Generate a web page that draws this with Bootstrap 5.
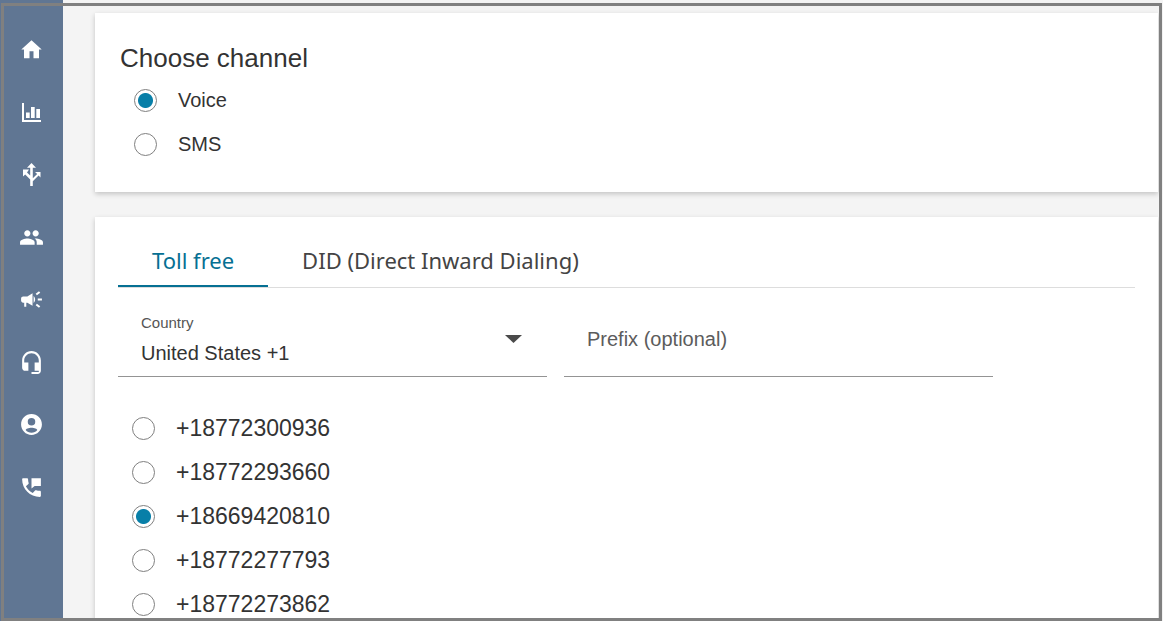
<!DOCTYPE html>
<html lang="en">
<head>
<meta charset="utf-8">
<meta name="viewport" content="width=device-width, initial-scale=1">
<title>Choose channel</title>
<link href="https://cdn.jsdelivr.net/npm/bootstrap@5.3.0/dist/css/bootstrap.min.css" rel="stylesheet">
<style>
  body { font-family: "Liberation Sans", Arial, sans-serif; font-size: 20px; line-height: 24px; color: #333; background: #f4f4f4; }
  .app-shell { height: 100vh; }
  /* window outline drawn over the whole app */
  .window-outline { position: fixed; inset: 3px 1px 0 1px; border: 3px solid #808080; pointer-events: none; z-index: 10; }
  .side-nav { width: 63px; background: #607693; padding-top: 37px; }
  .side-list { height: 463px; }
  .side-list a { color: #fff; }
  .side-list svg { width: 25px; height: 25px; fill: currentColor; display: block; }
  .page-area { padding: 13px 5px 0 32px; gap: 25px; }
  .panel { background: #fff; box-shadow: 0 2px 5px rgba(0, 0, 0, .2); }
  .channel-panel { padding: 29px 25px 26px; }
  .numbers-panel { padding: 17px 23px 23px; }
  .panel-title { font-size: 26px; line-height: 32px; font-weight: 400; }
  .choice { height: 44px; padding-left: 14px; gap: 21px; }
  .choice .form-check-input { width: 23px; height: 23px; margin: 0; border: 1px solid #808080; background: #fff; box-shadow: none; flex: none; }
  .choice .form-check-input:checked { background: radial-gradient(circle, #087fa8 7px, #fff 8px); }
  .number-list { font-size: 23px; margin-top: 29px; }
  .type-tabs { border-bottom: 1px solid #ddd; font-family: "Noto Sans", Tahoma, sans-serif; font-size: 22px; }
  .type-tabs .nav-link { height: 53px; padding: 0 34px; color: #444; background: none; border: 0; border-bottom: 2px solid transparent; border-radius: 0; }
  .type-tabs .nav-link.active { color: #067093; border-bottom-color: #067093; }
  .field-grid { display: grid; grid-template-columns: repeat(2, minmax(0, 429px)); gap: 17px; padding-top: 17px; }
  .line-field { height: 72px; border-bottom: 1px solid #949494; padding: 0 25px 3px 23px; }
  .line-field label { font-size: 15px; line-height: 20px; color: #555; margin-bottom: 8px; }
  .line-field select, .line-field input { appearance: none; border: 0; padding: 0; background: none; color: #333; outline: 0; width: 100%; }
  .line-field input::placeholder { color: #5c5c5c; opacity: 1; }
  .caret { width: 17px; height: 8px; fill: #4a4a4a; flex: none; }
</style>
<script src="https://cdn.jsdelivr.net/npm/bootstrap@5.3.0/dist/js/bootstrap.bundle.min.js" defer></script>
</head>
<body>
<div class="app-shell d-flex overflow-hidden">
  <nav class="side-nav flex-shrink-0" aria-label="Main">
    <ul class="side-list list-unstyled d-flex flex-column justify-content-between align-items-center m-0">
      <li><a href="#" aria-label="Home"><svg viewBox="0 0 25 25"><path d="M10.500 21.300v-7h4v7H20v-8.800h2.700L12.500 3.300 2.300 12.500H5v8.800z"/></svg></a></li>
      <li><a href="#" aria-label="Reports"><svg viewBox="0 0 25 25"><path d="M3 3h2v17h17v2H3zM7 12.500h3.700v5.500H7zM12 7h3.700v11H12zM17.300 9h3.700v9h-3.700z"/></svg></a></li>
      <li><a href="#" aria-label="Flows"><svg viewBox="0 0 25 25"><path d="M12.500 1l4.500 4.800h-3.200v10.400l4.400-4.200L16 10h5.500v5.500l-1.900-1.900-5.800 5.600V24h-2.600v-6.500L6.200 12.500 4 14.500V7.500h6L8 10.500l3.200 3V5.800H8z"/></svg></a></li>
      <li><a href="#" aria-label="Contacts"><svg viewBox="0 0 24 24"><path d="M16 11c1.660 0 2.990-1.340 2.990-3S17.660 5 16 5s-3 1.340-3 3 1.340 3 3 3zm-8 0c1.660 0 2.990-1.340 2.990-3S9.660 5 8 5 5 6.340 5 8s1.340 3 3 3zm0 2c-2.330 0-7 1.170-7 3.500V19h14v-2.500C15 14.170 10.330 13 8 13zm8 0c-.29 0-.62.02-.97.05 1.160.84 1.970 1.970 1.970 3.450V19h6v-2.500c0-2.330-4.670-3.500-7-3.500z"/></svg></a></li>
      <li><a href="#" aria-label="Campaigns"><svg viewBox="0 0 24 24"><path d="M18 11v2h4v-2h-4zm-2 6.610c.96.71 2.210 1.650 3.200 2.390.4-.53.8-1.070 1.200-1.600-.99-.74-2.240-1.680-3.200-2.400-.4.54-.8 1.080-1.200 1.610zM20.400 5.600c-.4-.53-.8-1.070-1.200-1.600-.99.74-2.240 1.680-3.200 2.400.4.530.8 1.070 1.200 1.600.96-.72 2.210-1.650 3.200-2.400zM4 9c-1.100 0-2 .9-2 2v2c0 1.100.9 2 2 2h1v4h2v-4h1l5 3V6L8 9H4zm11.500 3c0-1.330-.58-2.530-1.500-3.350v6.690c.92-.81 1.500-2.010 1.500-3.340z"/></svg></a></li>
      <li><a href="#" aria-label="Agents"><svg viewBox="0 0 24 24"><path d="M12 1c-4.970 0-9 4.030-9 9v7c0 1.660 1.340 3 3 3h3v-8H5v-2c0-3.870 3.130-7 7-7s7 3.130 7 7v2h-4v8h4v1h-7v2h6c1.660 0 3-1.340 3-3V10c0-4.970-4.030-9-9-9z"/></svg></a></li>
      <li><a href="#" aria-label="Account"><svg viewBox="0 0 24 24"><path fill-rule="evenodd" d="M12 2C6.480 2 2 6.480 2 12s4.480 10 10 10 10-4.480 10-10S17.520 2 12 2zM12 5.800a3.600 3.600 0 1 1 0 7.200 3.600 3.600 0 0 1 0-7.200zM12 15c2.700 0 5.600 1.100 5.600 2.300C16.300 18.900 14.300 20 12 20s-4.300-1.100-5.600-2.700C6.400 16.100 9.300 15 12 15z"/></svg></a></li>
      <li><a href="#" aria-label="Phone numbers"><svg viewBox="0 0 24 24"><path d="M20 15.200c-1.250 0-2.450-.2-3.570-.57-.35-.11-.74-.03-1.020.24l-2.200 2.500c-2.830-1.440-5.150-3.750-6.590-6.580l2.400-2.210c.28-.27.360-.66.250-1.010C8.900 6.450 8.700 5.250 8.700 4c0-.55-.45-1-1-1H4c-.55 0-1 .45-1 1 0 9.390 7.610 17 17 17 .55 0 1-.45 1-1v-3.800c0-.55-.45-1-1-1zM12 3v10l3-2.500h6V3h-9z"/></svg></a></li>
    </ul>
  </nav>
  <main class="page-area d-flex flex-column flex-grow-1">
    <section class="panel channel-panel">
      <h1 class="panel-title m-0">Choose channel</h1>
      <div class="mt-1">
        <div class="choice d-flex align-items-center"><input class="form-check-input" type="radio" name="channel" id="voice" checked><label for="voice">Voice</label></div>
        <div class="choice d-flex align-items-center"><input class="form-check-input" type="radio" name="channel" id="sms"><label for="sms">SMS</label></div>
      </div>
    </section>
    <section class="panel numbers-panel flex-shrink-0">
      <div class="type-tabs nav" role="tablist">
        <button class="nav-link active" type="button" role="tab" aria-selected="true">Toll free</button>
        <button class="nav-link" type="button" role="tab" aria-selected="false">DID (Direct Inward Dialing)</button>
      </div>
      <div class="field-grid">
        <div class="line-field d-flex align-items-center">
          <div class="flex-grow-1">
            <label class="d-block" for="country">Country</label>
            <select class="d-block" id="country"><option>United States +1</option></select>
          </div>
          <svg class="caret" viewBox="0 0 17 8" aria-hidden="true"><path d="M0 0h17l-8.500 8z"/></svg>
        </div>
        <div class="line-field d-flex align-items-center">
          <input type="text" id="prefix" placeholder="Prefix (optional)" aria-label="Prefix (optional)">
        </div>
      </div>
      <div class="number-list">
        <div class="choice d-flex align-items-center"><input class="form-check-input" type="radio" name="number" id="n1"><label for="n1">+18772300936</label></div>
        <div class="choice d-flex align-items-center"><input class="form-check-input" type="radio" name="number" id="n2"><label for="n2">+18772293660</label></div>
        <div class="choice d-flex align-items-center"><input class="form-check-input" type="radio" name="number" id="n3" checked><label for="n3">+18669420810</label></div>
        <div class="choice d-flex align-items-center"><input class="form-check-input" type="radio" name="number" id="n4"><label for="n4">+18772277793</label></div>
        <div class="choice d-flex align-items-center"><input class="form-check-input" type="radio" name="number" id="n5"><label for="n5">+18772273862</label></div>
      </div>
    </section>
  </main>
</div>
<div class="window-outline"></div>
</body>
</html>
